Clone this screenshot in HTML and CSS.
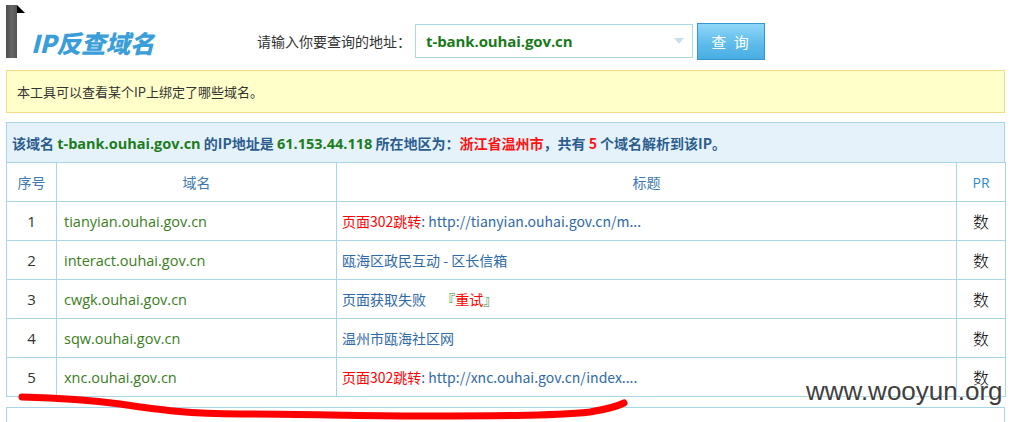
FILE: index.html
```html
<!DOCTYPE html>
<html lang="zh-CN">
<head>
<meta charset="utf-8">
<title>IP反查域名</title>
<link rel="stylesheet" href="styles.css">
</head>
<body>
<div class="page">
  <div class="header">
    <div class="logo-bar"></div>
    <h1 class="title">IP反查域名</h1>
    <div class="search">
      <span class="search-label">请输入你要查询的地址：</span>
      <div class="search-input">
        <span class="search-value">t-bank.ouhai.gov.cn</span>
        <span class="search-arrow"></span>
      </div>
      <div class="search-btn">查&nbsp;询</div>
    </div>
  </div>

  <div class="notice">本工具可以查看某个IP上绑定了哪些域名。</div>

  <div class="info">该域名 <span class="g">t-bank.ouhai.gov.cn</span> 的IP地址是 <span class="g">61.153.44.118</span> 所在地区为：<span class="r">浙江省温州市</span>，共有 <span class="r">5</span> 个域名解析到该IP。</div>

  <table class="result">
    <thead>
      <tr><th class="c-no">序号</th><th class="c-dom">域名</th><th class="c-title">标题</th><th class="c-pr">PR</th></tr>
    </thead>
    <tbody>
      <tr><td class="c-no">1</td><td class="c-dom">tianyian.ouhai.gov.cn</td><td class="c-title"><span class="r">页面302跳转</span>: http://tianyian.ouhai.gov.cn/m...</td><td class="c-pr">数</td></tr>
      <tr><td class="c-no">2</td><td class="c-dom">interact.ouhai.gov.cn</td><td class="c-title">瓯海区政民互动 - 区长信箱</td><td class="c-pr">数</td></tr>
      <tr><td class="c-no">3</td><td class="c-dom">cwgk.ouhai.gov.cn</td><td class="c-title">页面获取失败 <span class="retry"><span class="gb">『</span><span class="r">重试</span><span class="gb">』</span></span></td><td class="c-pr">数</td></tr>
      <tr><td class="c-no">4</td><td class="c-dom">sqw.ouhai.gov.cn</td><td class="c-title">温州市瓯海社区网</td><td class="c-pr">数</td></tr>
      <tr><td class="c-no">5</td><td class="c-dom">xnc.ouhai.gov.cn</td><td class="c-title"><span class="r">页面302跳转</span>: http://xnc.ouhai.gov.cn/index....</td><td class="c-pr">数</td></tr>
    </tbody>
  </table>

  <div class="next-box"></div>
</div>

<svg class="scribble" width="1011" height="422" viewBox="0 0 1011 422">
  <path d="M22,397 C60,398 90,400 120,404 C160,410 190,414 240,414 C300,414 360,416 420,416 C490,416 550,416 590,412 C608,409 618,406 624,403" fill="none" stroke="#ff0000" stroke-width="7" stroke-linecap="round" stroke-linejoin="round"/>
</svg>
<div class="watermark">www.wooyun.org</div>
</body>
</html>
```

FILE: styles.css
```css
* { box-sizing: border-box; }

html, body {
  margin: 0;
  padding: 0;
  background: #ffffff;
}

body {
  font-family: "Noto Sans", "Noto Sans CJK SC", sans-serif;
  color: #333333;
  position: relative;
  height: 422px;
  overflow: hidden;
}

.page {
  padding: 5px 6px 0 6px;
}

/* ---------- header ---------- */
.header {
  display: flex;
  align-items: flex-start;
  height: 53px;
}

.logo-bar {
  position: relative;
  width: 11px;
  height: 53px;
  background: linear-gradient(to right, #4e4e4e, #666666 50%, #555555);
  flex: 0 0 auto;
}

.logo-bar::after {
  content: "";
  position: absolute;
  left: 11px;
  top: 0;
  width: 0;
  height: 0;
  border-bottom: 8px solid #000000;
  border-right: 8px solid transparent;
}

.title {
  margin: 22px 0 0 14px;
  width: 226px;
  flex: 0 0 auto;
  font-family: "Noto Sans CJK SC", "Noto Sans", sans-serif;
  font-size: 24.5px;
  line-height: 32px;
  font-weight: 900;
  font-style: italic;
  color: #3a9ed8;
}

.search {
  display: flex;
  align-items: flex-start;
  margin-top: 19px;
}

.search-label {
  width: 158px;
  height: 34px;
  line-height: 34px;
  font-size: 14px;
  color: #333333;
  font-family: "Noto Sans CJK SC", sans-serif;
}

.search-input {
  position: relative;
  display: flex;
  align-items: center;
  width: 278px;
  height: 34px;
  border: 1px solid #a9d8e6;
  padding-left: 10px;
}

.search-value {
  font-size: 15px;
  font-weight: bold;
  color: #197a19;
  font-family: "Open Sans", "Noto Sans", sans-serif;
  letter-spacing: -0.1px;
}

.search-arrow {
  margin-left: auto;
  margin-right: 8px;
  width: 0;
  height: 0;
  border-left: 5px solid transparent;
  border-right: 5px solid transparent;
  border-top: 6px solid #c9e0ea;
}

.search-btn {
  margin-left: 4px;
  margin-top: -1px;
  width: 68px;
  height: 37px;
  border: 1px solid #3795d2;
  background: linear-gradient(to bottom, #8fd7f9, #5cbaea 60%, #4aaee3);
  color: #ffffff;
  font-size: 15px;
  font-family: "Noto Sans CJK SC", sans-serif;
  display: flex;
  align-items: center;
  justify-content: center;
  letter-spacing: 2px;
}

/* ---------- notice ---------- */
.notice {
  margin-top: 12px;
  height: 43px;
  border: 1px solid #f2dc86;
  background: #ffffc9;
  padding-left: 10px;
  display: flex;
  align-items: center;
  font-size: 13px;
  color: #333333;
  font-family: "Noto Sans CJK SC", sans-serif;
}

/* ---------- info ---------- */
.info {
  margin-top: 9px;
  height: 40px;
  line-height: 40px;
  border: 1px solid #a9d6e5;
  border-bottom: none;
  background: #e6f2fa;
  padding-left: 5px;
  white-space: nowrap;
  font-size: 14px;
  font-weight: bold;
  color: #2b5d8f;
  font-family: "Noto Sans CJK SC", sans-serif;
}

.info .g { color: #1c7d1c; font-family: "Open Sans", "Noto Sans CJK SC", sans-serif; font-size: 14.5px; }
.r { color: #ff0000; }
.info .r { color: #ff1010; }

/* ---------- table ---------- */
.result {
  width: 999px;
  border-collapse: collapse;
  table-layout: fixed;
  font-size: 14px;
}

.result th,
.result td {
  border: 1px solid #a9d6e5;
  height: 39px;
  padding: 0;
  font-weight: normal;
  vertical-align: middle;
}

.result th {
  font-family: "Noto Sans CJK SC", sans-serif;
  font-size: 14px;
  color: #3d78b2;
  text-align: center;
}

.result th.c-pr {
  color: #2a8ad4;
  font-family: "Open Sans", sans-serif;
}

.result .c-no { width: 50px; text-align: center; }
.result .c-dom { width: 280px; }
.result .c-title { width: 620px; }
.result .c-pr { width: 49px; text-align: center; }

.result td.c-no {
  color: #333333;
  font-family: "Open Sans", sans-serif;
  font-size: 15px;
}

.result td.c-dom {
  padding-left: 7px;
  color: #3a7d22;
  font-family: "Open Sans", "Noto Sans", sans-serif;
  font-size: 14.5px;
}

.result td.c-title {
  padding-left: 5px;
  color: #2f6aa6;
  font-family: "Noto Sans CJK SC", sans-serif;
  font-size: 14px;
}

.result td.c-pr {
  color: #000000;
  font-family: "Noto Sans CJK SC", sans-serif;
  font-size: 16px;
  font-weight: 300;
}

.retry { margin-left: 12px; }
.gb { color: #1a8a1a; }

/* ---------- next box ---------- */
.next-box {
  margin-top: 10px;
  height: 15px;
  border: 1px solid #a9d6e5;
  border-bottom: none;
}

/* ---------- overlays ---------- */
.scribble {
  position: absolute;
  left: 0;
  top: 0;
  pointer-events: none;
}

.watermark {
  position: absolute;
  left: 806px;
  top: 376px;
  font-family: "Liberation Sans", Arial, sans-serif;
  font-size: 26px;
  color: #404040;
  text-shadow: 0 0 2px #ffffff, 0 0 2px #ffffff;
}
```
